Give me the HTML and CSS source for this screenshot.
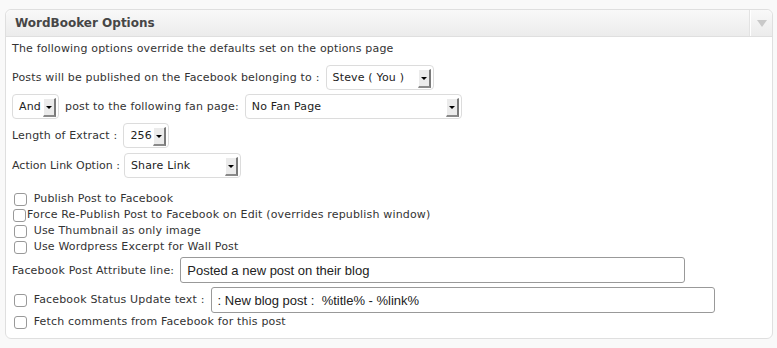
FILE: index.html
```html
<!DOCTYPE html>
<html lang="en">
<head>
    <meta charset="UTF-8">
    <title>WordBooker Options</title>
    <link rel="stylesheet" href="styles.css">
</head>
<body>

    <div class="postbox">
        <div class="hndle">
            <h3>WordBooker Options</h3>
            <div class="handlediv"><span class="tri"></span></div>
        </div>

        <div class="inside">
            <p class="intro">The following options override the defaults set on the options page</p>

            <div class="row first">
                <span>Posts will be published on the Facebook belonging to :</span>
                <div class="select w-steve">Steve ( You )<span class="arrow"></span></div>
            </div>

            <div class="row">
                <div class="select w-and">And<span class="arrow"></span></div>
                <span>post to the following fan page:</span>
                <div class="select w-fan">No Fan Page<span class="arrow"></span></div>
            </div>

            <div class="row">
                <span>Length of Extract :</span>
                <div class="select w-len">256<span class="arrow"></span></div>
            </div>

            <div class="row action">
                <span>Action Link Option :</span>
                <div class="select w-action">Share Link<span class="arrow"></span></div>
            </div>

            <!-- Checkbox options -->
            <div class="checks">
                <label><input type="checkbox"> Publish Post to Facebook</label>
                <label class="tight"><input type="checkbox">Force Re-Publish Post to Facebook on Edit (overrides republish window)</label>
                <label><input type="checkbox"> Use Thumbnail as only image</label>
                <label><input type="checkbox"> Use Wordpress Excerpt for Wall Post</label>
            </div>

            <div class="row field">
                <span>Facebook Post Attribute line:</span>
                <input type="text" class="text w-attr" value="Posted a new post on their blog">
            </div>

            <div class="row field">
                <label><input type="checkbox"> Facebook Status Update text :</label>
                <input type="text" class="text w-status" value=": New blog post :  %title% - %link%">
            </div>

            <div class="checks last">
                <label><input type="checkbox"> Fetch comments from Facebook for this post</label>
            </div>
        </div>
    </div>

</body>
</html>
```

FILE: styles.css
```css
body {
    margin: 0;
    padding: 9px 5px 0 5px;
    background: #f9f9f9;
    font-family: 'DejaVu Sans', sans-serif;
    font-size: 11px;
    color: #333;
}

/* Postbox */
.postbox {
    background: #fff;
    border: 1px solid #dfdfdf;
    border-radius: 6px;
    width: 766px;
}

.hndle {
    display: flex;
    height: 26px;
    border-bottom: 1px solid #dfdfdf;
    border-radius: 6px 6px 0 0;
    background: linear-gradient(to bottom, #f9f9f9, #ececec);
}

.hndle h3 {
    flex: 1;
    margin: 0;
    padding: 0 0 0 9px;
    font-size: 12px;
    font-weight: bold;
    line-height: 26px;
    color: #464646;
}

.handlediv {
    width: 22px;
    border-left: 1px solid #fff;
    box-shadow: -1px 0 0 #e3e3e3;
    display: flex;
    justify-content: center;
    padding-top: 10px;
    box-sizing: border-box;
}

.tri {
    width: 0;
    height: 0;
    border-left: 5px solid transparent;
    border-right: 5px solid transparent;
    border-top: 7px solid #c9c9c9;
}

.inside {
    padding: 3px 6px 8px 6px;
    letter-spacing: 0.17px;
}

.intro {
    margin: 0;
    line-height: 17px;
}

/* Rows with selects */
.row {
    display: flex;
    align-items: center;
    gap: 6px;
    margin-top: 4px;
}

.row.first {
    margin-top: 8px;
}

.row.action {
    margin-top: 5px;
    gap: 4px;
}

.row.action span {
    letter-spacing: 0;
}

.select {
    position: relative;
    box-sizing: border-box;
    height: 25px;
    line-height: 23px;
    padding-left: 6px;
    border: 1px solid #dcdcdc;
    border-radius: 4px;
    background: #fff;
    font-size: 11px;
    color: #222;
}

.select .arrow {
    position: absolute;
    right: 2px;
    top: 3px;
    width: 10px;
    height: 16px;
    background: #ebebeb;
    border-top: 1px solid #fff;
    border-left: 1px solid #fff;
    border-right: 2px solid #7a7a7a;
    border-bottom: 2px solid #8a8a8a;
}

.select .arrow::after {
    content: "";
    position: absolute;
    left: 2px;
    top: 7px;
    border-left: 3px solid transparent;
    border-right: 3px solid transparent;
    border-top: 3px solid #000;
}

.w-steve { width: 108px; }
.w-and { width: 47px; }
.w-fan { width: 217px; }
.w-len { width: 46px; }
.w-action { width: 117px; }

/* Checkboxes */
.checks {
    display: flex;
    flex-direction: column;
    margin-top: 13px;
}

.checks.last {
    margin-top: 1px;
}

.checks label,
.field label {
    display: flex;
    align-items: center;
    line-height: 16px;
    white-space: pre;
}

input[type="checkbox"] {
    appearance: none;
    box-sizing: border-box;
    width: 13px;
    height: 13px;
    margin: 0 3px 0 2px;
    border: 1px solid #999;
    border-radius: 3px;
    background: #fff;
}

.checks label.tight input {
    margin: 0 1px 0 1px;
}

/* Text fields */
.field {
    margin-top: 2px;
}

.field + .field {
    margin-top: 4px;
}

.text {
    box-sizing: border-box;
    height: 26px;
    padding: 0 6px;
    border: 1px solid #999;
    border-radius: 3px;
    font-family: 'Liberation Sans', Arial, sans-serif;
    font-size: 13px;
    letter-spacing: 0;
    color: #222;
    background: #fff;
}

.w-attr { width: 505px; }
.w-status { width: 504px; }
```
